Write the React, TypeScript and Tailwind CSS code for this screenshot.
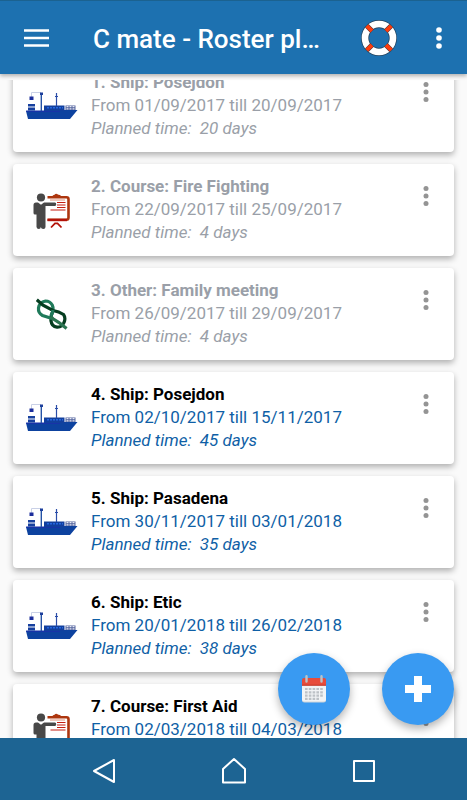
import React from "react";

type EntryKind = "ship" | "course" | "other";

interface RosterEntry {
  id: number;
  kind: EntryKind;
  title: string;
  from: string;
  till: string;
  days: number;
  past: boolean;
}

const entries: RosterEntry[] = [
  { id: 1, kind: "ship", title: "Ship: Posejdon", from: "01/09/2017", till: "20/09/2017", days: 20, past: true },
  { id: 2, kind: "course", title: "Course: Fire Fighting", from: "22/09/2017", till: "25/09/2017", days: 4, past: true },
  { id: 3, kind: "other", title: "Other: Family meeting", from: "26/09/2017", till: "29/09/2017", days: 4, past: true },
  { id: 4, kind: "ship", title: "Ship: Posejdon", from: "02/10/2017", till: "15/11/2017", days: 45, past: false },
  { id: 5, kind: "ship", title: "Ship: Pasadena", from: "30/11/2017", till: "03/01/2018", days: 35, past: false },
  { id: 6, kind: "ship", title: "Ship: Etic", from: "20/01/2018", till: "26/02/2018", days: 38, past: false },
  { id: 7, kind: "course", title: "Course: First Aid", from: "02/03/2018", till: "04/03/2018", days: 3, past: false },
];

function ShipIcon() {
  return (
    <svg width="52" height="28" viewBox="0 0 52 28" aria-hidden="true">
      <path d="M5.5 5V0.5H15" fill="none" stroke="#c9d0e6" strokeWidth="1" />
      <path d="M0 19H34L35 18H51.5L44 27H2Z" fill="#0d429f" />
      <path d="M0 18.5H34V20H0.5Z" fill="#1733a8" />
      <rect x="3.5" y="4.5" width="4" height="3.5" fill="#1c2e9c" />
      <rect x="14.6" y="1" width="1.4" height="18" fill="#2553a6" />
      <rect x="14" y="0.5" width="3" height="2.5" fill="#1c3f9c" />
      <path d="M2 12H9V14.6H2ZM2 15.6H9V18.5H2Z" fill="#17409e" />
      <path d="M18 13.5H38.5V19H18Z" fill="#123f9d" />
      <path d="M21 15.8H37" stroke="#2467e0" strokeWidth="1.6" strokeDasharray="2 1" />
      <path d="M30.5 1V14M29 4.5H32" stroke="#2a4da8" strokeWidth="1.2" />
      <path d="M39.5 13.5H49.5V18H39.5Z" fill="#53639c" />
      <path d="M40.5 14.7H49M40.5 16.8H49" stroke="#e6eaf6" strokeWidth="1.2" strokeDasharray="2 1" />
    </svg>
  );
}

function CourseIcon() {
  return (
    <svg width="38" height="38" viewBox="0 0 38 38" aria-hidden="true">
      <path
        d="M14.5 6.2H33.5Q35.5 6.2 35.5 8.2V26.5Q35.5 28.7 33.5 28.7H14.5"
        fill="none"
        stroke="#ad360f"
        strokeWidth="2.6"
      />
      <path d="M14.5 29H34" stroke="#b31208" strokeWidth="2.4" />
      <path d="M19 5.5Q20 4 21.5 3.8Q22.5 2.5 24 3Q25.5 3.8 27 4L28.5 5.5Z" fill="#ad360f" />
      <path d="M17 9H32" stroke="#e0907a" strokeWidth="1" />
      <path d="M24 11.5H32.5M24 14H32.5M24 16.5H32.5M17.5 19H32.5" stroke="#c51f12" strokeWidth="1.2" />
      <path d="M18 36.5 22 32.3H24.5L28.5 36.5" fill="none" stroke="#b31208" strokeWidth="1.8" />
      <circle cx="8" cy="6.5" r="4.1" fill="#484848" />
      <path
        d="M3 11.5H5L8 13.8 11 11.5H22Q23.2 11.5 23.2 13.2T22 15H12.5V36Q12.5 38 10.3 38T7.8 36Q7.8 38 5.8 38T3.5 36V23.5H2Q0.5 23.5 0.5 22V14Q0.5 11.5 3 11.5Z"
        fill="#484848"
      />
    </svg>
  );
}

function KnotIcon() {
  return (
    <svg width="32" height="32" viewBox="0 0 32 32" fill="none" strokeWidth="3.2" aria-hidden="true">
      <path d="M15 23Q14.5 19 16 15" stroke="#063d20" />
      <path d="M16 16Q18 11 16.2 7Q14 3 9.5 3Q3.5 4 2.5 10Q2 15 6.5 17.5L16 20.5" stroke="#1f7a5a" />
      <path d="M0.8 1.8 7 7.2 17 12.5Q23 13.5 27.5 16.5Q30 20 28 24.5Q26 29.5 21 29.2Q15.5 28.5 15 22.5" stroke="#063d20" />
      <path d="M14.5 18.5 17 20.8 23 24.6 30.6 30.5" stroke="#2b7551" />
      <path d="M17 12Q16.5 15 14.8 18" stroke="#1f7a5a" />
    </svg>
  );
}

function LifebuoyIcon() {
  return (
    <svg width="36" height="36" viewBox="0 0 36 36" aria-hidden="true">
      <circle cx="18" cy="18" r="14" fill="none" stroke="#25445f" strokeWidth="8" />
      <circle cx="18" cy="18" r="14" fill="none" stroke="#fff" strokeWidth="6.6" />
      <g stroke="#3c3a48" strokeWidth="5">
        <path d="M5.8 5.8 11 11M30.2 5.8 25 11M5.8 30.2 11 25M30.2 30.2 25 25" />
      </g>
      <g stroke="#ff3d0d" strokeWidth="4">
        <path d="M5.8 5.8 11 11M30.2 5.8 25 11M5.8 30.2 11 25M30.2 30.2 25 25" />
      </g>
    </svg>
  );
}

function CalendarIcon() {
  return (
    <svg width="24" height="28" viewBox="0 0 24 28" aria-hidden="true">
      <path d="M0 10H24V25Q24 27.5 21.5 27.5H2.5Q0 27.5 0 25Z" fill="#cfd4d9" />
      <path d="M0 10H24V24.5Q24 26.5 21.5 26.5H2.5Q0 26.5 0 24.5Z" fill="#f1f3f5" />
      <path d="M0 10.5V5Q0 3 2 3H22Q24 3 24 5V10.5Z" fill="#e74c3c" />
      <path d="M0 9.7H24V10.7H0Z" fill="#c0392b" />
      <path d="M4.5 1.2V6.5M19.5 1.2V6.5" stroke="#bdc3c7" strokeWidth="2.4" strokeLinecap="round" />
      <path d="M3 14H21M3 17.3H21M3 20.6H21M3 23.9H18" stroke="#bcc1c6" strokeWidth="2.2" strokeDasharray="2.6 1.2" />
    </svg>
  );
}

const icons = {
  ship: <ShipIcon />,
  course: <CourseIcon />,
  other: <KnotIcon />,
};

function EntryCard({ entry }: { entry: RosterEntry }) {
  return (
    <li className="flex h-23 items-center rounded bg-white shadow-[0_3px_6px_rgba(0,0,0,0.3)]">
      <div className="flex w-[78px] shrink-0 justify-center">{icons[entry.kind]}</div>
      <div
        className={`min-w-0 flex-1 pb-0.5 text-[17px] leading-[23px] whitespace-nowrap ${
          entry.past ? "text-[#9a9fa8]" : "text-[#0f5fa6]"
        }`}
      >
        <h2 className={`font-bold ${entry.past ? "" : "text-black"}`}>
          {entry.id}. {entry.title}
        </h2>
        <p>
          From {entry.from} till {entry.till}
        </p>
        <p className="italic">
          Planned time:&nbsp; {entry.days} days
        </p>
      </div>
      <button
        type="button"
        aria-label={`Options for ${entry.title}`}
        className="mr-4 flex h-full w-6 shrink-0 justify-center pt-[21px]"
      >
        <svg width="6" height="22" viewBox="0 0 6 22" fill="#949494">
          <circle cx="3" cy="3.5" r="2.5" />
          <circle cx="3" cy="11" r="2.5" />
          <circle cx="3" cy="18.5" r="2.5" />
        </svg>
      </button>
    </li>
  );
}

function App() {
  return (
    <div className="flex h-screen flex-col bg-[#fafafa] font-[Roboto,sans-serif]">
      <header className="z-10 flex h-[74px] shrink-0 items-center border-t border-[#1b6290] bg-[#1d71b0] pr-[14px] pl-6 text-white shadow-[0_2px_4px_rgba(0,0,0,0.3)]">
        <button type="button" aria-label="Open menu">
          <svg width="25" height="18" viewBox="0 0 25 18" stroke="#fff" strokeWidth="2.5">
            <path d="M0 1.5H25M0 9H25M0 16.5H25" />
          </svg>
        </button>
        <h1 className="ml-11 flex-1 pt-0.5 text-[26px] leading-8 font-medium whitespace-nowrap">
          C mate - Roster pl…
        </h1>
        <button type="button" aria-label="Help">
          <LifebuoyIcon />
        </button>
        <button type="button" aria-label="More options" className="ml-7 flex w-7 justify-center">
          <svg width="6" height="22" viewBox="0 0 6 22" fill="#fff">
            <circle cx="3" cy="3" r="2.8" />
            <circle cx="3" cy="11" r="2.8" />
            <circle cx="3" cy="19" r="2.8" />
          </svg>
        </button>
      </header>

      <main className="relative flex min-h-0 flex-1 flex-col pt-1.5">
        <div className="min-h-0 flex-1 overflow-hidden">
          {/* list is scrolled a little past the first card */}
          <ul className="-mt-5 flex flex-col gap-3 px-[13px]">
            {entries.map((entry) => (
              <EntryCard key={entry.id} entry={entry} />
            ))}
          </ul>
        </div>
        <div className="absolute right-[13px] bottom-[13px] flex gap-8">
          <button
            type="button"
            aria-label="Calendar"
            className="flex size-18 items-center justify-center rounded-full bg-[#399af2] shadow-[0_4px_9px_rgba(0,0,0,0.3)]"
          >
            <CalendarIcon />
          </button>
          <button
            type="button"
            aria-label="Add entry"
            className="flex size-18 items-center justify-center rounded-full bg-[#399af2] shadow-[0_4px_9px_rgba(0,0,0,0.3)]"
          >
            <svg width="26" height="26" viewBox="0 0 26 26" stroke="#fff" strokeWidth="8">
              <path d="M13 0V26M0 13H26" />
            </svg>
          </button>
        </div>
      </main>

      <nav className="z-10 flex h-[62px] shrink-0 items-center justify-center gap-[105px] bg-[#1d6493] pt-1">
        <button type="button" aria-label="Back">
          <svg width="24" height="28" viewBox="0 0 24 28" fill="none" stroke="#fff" strokeWidth="2" strokeLinejoin="round">
            <path d="M22 3V25L2 14Z" />
          </svg>
        </button>
        <button type="button" aria-label="Home">
          <svg width="26" height="28" viewBox="0 0 26 28" fill="none" stroke="#fff" strokeWidth="2" strokeLinejoin="round">
            <path d="M2 25.5V12L13 2 24 12V25.5Z" />
          </svg>
        </button>
        <button type="button" aria-label="Recent apps">
          <svg width="24" height="28" viewBox="0 0 24 28" fill="none" stroke="#fff" strokeWidth="2" strokeLinejoin="round">
            <rect x="2" y="4" width="20" height="20" />
          </svg>
        </button>
      </nav>
    </div>
  );
}

export default App;
